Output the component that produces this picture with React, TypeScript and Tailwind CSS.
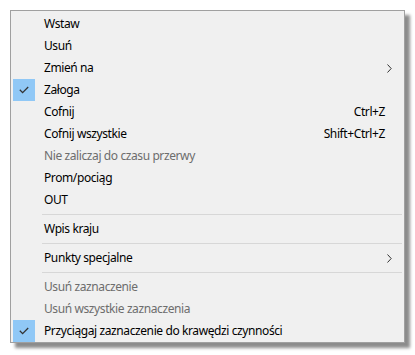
import React from 'react';

type Item =
  | { sep: true }
  | { label: string; shortcut?: string; sub?: boolean; checked?: boolean; disabled?: boolean; sep?: false };

const items: Item[] = [
  { label: 'Wstaw' },
  { label: 'Usuń' },
  { label: 'Zmień na', sub: true },
  { label: 'Załoga', checked: true },
  { label: 'Cofnij', shortcut: 'Ctrl+Z' },
  { label: 'Cofnij wszystkie', shortcut: 'Shift+Ctrl+Z' },
  { label: 'Nie zaliczaj do czasu przerwy', disabled: true },
  { label: 'Prom/pociąg' },
  { label: 'OUT' },
  { sep: true },
  { label: 'Wpis kraju' },
  { sep: true },
  { label: 'Punkty specjalne', sub: true },
  { sep: true },
  { label: 'Usuń zaznaczenie', disabled: true },
  { label: 'Usuń wszystkie zaznaczenia', disabled: true },
  { label: 'Przyciągaj zaznaczenie do krawędzi czynności', checked: true },
];

function Check() {
  return (
    <svg width="10" height="8" viewBox="0 0 10 8" fill="none">
      <path d="M0.8 3.8 L3.6 6.6 L9.2 1" stroke="#333" strokeWidth="1.3" />
    </svg>
  );
}

function Chevron() {
  return (
    <svg width="5" height="9" viewBox="0 0 5 9" fill="none">
      <path d="M0.5 0.5 L4.2 4.5 L0.5 8.5" stroke="#333" strokeWidth="1" />
    </svg>
  );
}

export default function App() {
  return (
    <div className="w-[415px] h-[355px] bg-white pt-[10px] pl-[10px]" style={{ fontFamily: '"Noto Sans", "Open Sans", sans-serif' }}>
      <div className="w-[395px] border border-[#a0a0a0] bg-[#f0f0f0] pt-[2px] pb-0 pl-[2px] pr-[2px] shadow-[5px_5px_3px_rgba(0,0,0,0.45)]">
        {items.map((it, i) =>
          it.sep ? (
            <div key={i} className="h-[7px] flex items-center pl-[29px]">
              <div className="h-px w-full bg-[#d7d7d7]" />
            </div>
          ) : (
            <div key={i} className="h-[22px] flex items-center text-[12px] tracking-[-0.4px]">
              <div className={`w-[22px] h-[22px] flex items-center justify-center ${it.checked ? 'bg-[#90c8f6]' : ''}`}>
                {it.checked && <Check />}
              </div>
              <span className={`ml-[9px] flex-1 ${it.disabled ? 'text-[#6d6d6d]' : 'text-black'}`}>{it.label}</span>
              {it.shortcut && <span className="text-black mr-[17px]">{it.shortcut}</span>}
              {it.sub && (
                <span className="mr-[10px] flex items-center">
                  <Chevron />
                </span>
              )}
            </div>
          )
        )}
      </div>
    </div>
  );
}
